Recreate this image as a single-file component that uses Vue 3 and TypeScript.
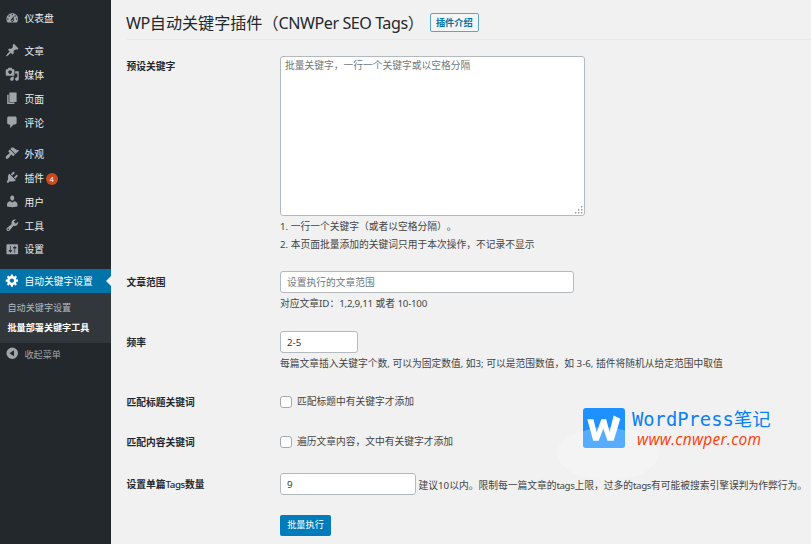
<script setup lang="ts">
import { ref } from 'vue'

interface MenuItem {
  label: string
  icon: string
  badge?: number
}

const groups: MenuItem[][] = [
  [
    {
      label: '仪表盘',
      icon: 'M3.76 16h12.48c1.1-1.37 1.76-3.11 1.76-5 0-4.42-3.58-8-8-8s-8 3.58-8 8c0 1.89.66 3.63 1.76 5zM10 4c.55 0 1 .45 1 1s-.45 1-1 1-1-.45-1-1 .45-1 1-1zM6 6c.55 0 1 .45 1 1s-.45 1-1 1-1-.45-1-1 .45-1 1-1zm8 0c.55 0 1 .45 1 1s-.45 1-1 1-1-.45-1-1 .45-1 1-1zm-5.37 5.55L12 7v6c0 1.1-.9 2-2 2s-2-.9-2-2c0-.57.24-1.08.63-1.45zM4 10c.55 0 1 .45 1 1s-.45 1-1 1-1-.45-1-1 .45-1 1-1zm12 0c.55 0 1 .45 1 1s-.45 1-1 1-1-.45-1-1 .45-1 1-1zm-5 3c0-.55-.45-1-1-1s-1 .45-1 1 .45 1 1 1 1-.45 1-1z',
    },
  ],
  [
    {
      label: '文章',
      icon: 'M10.44 3.02l1.82-1.82 6.36 6.35-1.83 1.82c-1.05-.68-2.48-.57-3.41.36l-.75.75c-.92.93-1.04 2.35-.35 3.41l-1.83 1.82-2.41-2.41-2.8 2.79c-.42.42-3.38 2.71-3.8 2.29s1.86-3.39 2.28-3.81l2.79-2.79L4.1 9.36l1.83-1.82c1.05.69 2.48.57 3.4-.36l.75-.75c.93-.92 1.05-2.35.36-3.41z',
    },
    {
      label: '媒体',
      icon: 'M13 11V4c0-.55-.45-1-1-1h-1.67L9 1H5L3.67 3H2c-.55 0-1 .45-1 1v7c0 .55.45 1 1 1h10c.55 0 1-.45 1-1zM7 4.5c1.38 0 2.5 1.12 2.5 2.5S8.38 9.5 7 9.5 4.5 8.38 4.5 7 5.62 4.5 7 4.5zM14 6h5v10.5c0 1.38-1.12 2.5-2.5 2.5S14 17.88 14 16.5s1.12-2.5 2.5-2.5c.17 0 .34.02.5.05V9h-3V6zm-4 8.05V13h2v3.5c0 1.38-1.12 2.5-2.5 2.5S7 17.88 7 16.5 8.12 14 9.5 14c.17 0 .34.02.5.05z',
    },
    { label: '页面', icon: 'M6 15V2h10v13H6zm-1 1h8v2H3V5h2v11z' },
    {
      label: '评论',
      icon: 'M5 2h9c1.1 0 2 .9 2 2v7c0 1.1-.9 2-2 2h-2l-5 5v-5H5c-1.1 0-2-.9-2-2V4c0-1.1.9-2 2-2z',
    },
  ],
  [
    {
      label: '外观',
      icon: 'M14.48 11.06L7.41 3.99l1.5-1.5c.5-.56 2.3-.47 3.51.32 1.21.8 1.43 1.28 2.91 2.1 1.18.64 2.45 1.26 4.45.85zm-.71.71L6.7 4.7 4.93 6.47c-.39.39-.39 1.02 0 1.41l1.06 1.06c.39.39.39 1.03 0 1.42-.6.6-1.43 1.11-2.21 1.69-.35.26-.7.53-1.01.84C1.43 14.23.4 16.08 1.4 17.07c.99 1 2.84-.03 4.18-1.36.31-.31.58-.66.85-1.02.57-.78 1.08-1.61 1.69-2.21.39-.39 1.02-.39 1.41 0l1.06 1.06c.39.39 1.02.39 1.41 0z',
    },
    {
      label: '插件',
      badge: 4,
      icon: 'M13.11 4.36L9.87 7.6 8 5.73l3.24-3.24c.35-.34 1.05-.2 1.56.32.52.51.66 1.21.31 1.55zm-8 1.77l.91-1.12 9.01 9.01-1.19.84c-.71.71-2.63 1.16-3.82 1.16H6.14L4.9 17.26c-.59.59-1.54.59-2.12 0-.59-.58-.59-1.53 0-2.12l1.24-1.24v-3.88c0-1.13.4-3.19 1.09-3.89zm7.26 3.97l3.24-3.24c.34-.35 1.04-.21 1.55.31.52.51.66 1.21.31 1.55l-3.24 3.25z',
    },
    {
      label: '用户',
      icon: 'M10 9.25c-2.27 0-2.73-3.44-2.73-3.44C7 4.02 7.82 2 9.97 2c2.16 0 2.98 2.02 2.71 3.81 0 0-.41 3.44-2.68 3.44zm0 2.57L12.72 10c2.39 0 4.52 2.33 4.52 4.53v2.49s-3.65 1.13-7.24 1.13c-3.65 0-7.24-1.13-7.24-1.13v-2.49c0-2.25 1.94-4.48 4.47-4.48z',
    },
    {
      label: '工具',
      icon: 'M16.68 9.77c-1.34 1.34-3.3 1.67-4.95.99l-5.41 6.52c-.99.99-2.59.99-3.58 0s-.99-2.59 0-3.57l6.52-5.42c-.68-1.65-.35-3.61.99-4.95 1.28-1.28 3.12-1.62 4.72-1.06l-2.89 2.89 2.82 2.82 2.86-2.87c.53 1.58.18 3.39-1.08 4.65zM3.81 16.21c.4.39 1.04.39 1.43 0 .4-.4.4-1.04 0-1.43-.39-.4-1.03-.4-1.43 0-.39.39-.39 1.03 0 1.43z',
    },
    {
      label: '设置',
      icon: 'M18 16V4c0-.55-.45-1-1-1H3c-.55 0-1 .45-1 1v12c0 .55.45 1 1 1h14c.55 0 1-.45 1-1zM8 11h1c.55 0 1 .45 1 1s-.45 1-1 1H8v1.5c0 .28-.22.5-.5.5s-.5-.22-.5-.5V13H6c-.55 0-1-.45-1-1s.45-1 1-1h1V5.5c0-.28.22-.5.5-.5s.5.22.5.5V11zm5-2h-1c-.55 0-1-.45-1-1s.45-1 1-1h1V5.5c0-.28.22-.5.5-.5s.5.22.5.5V7h1c.55 0 1 .45 1 1s-.45 1-1 1h-1v5.5c0 .28-.22.5-.5.5s-.5-.22-.5-.5V9z',
    },
  ],
]

const gear =
  'M18 12h-2.18c-.17.7-.44 1.35-.81 1.93l1.54 1.54-2.1 2.1-1.54-1.54c-.58.36-1.23.63-1.91.79V19H8v-2.18c-.68-.16-1.33-.43-1.91-.79l-1.54 1.54-2.12-2.12 1.54-1.54c-.36-.58-.63-1.23-.79-1.91H1V9.03h2.17c.16-.7.44-1.35.8-1.94L2.43 5.55l2.1-2.1 1.54 1.54c.58-.37 1.24-.64 1.93-.81V2h3v2.18c.68.16 1.33.43 1.91.79l1.54-1.54 2.12 2.12-1.54 1.54c.36.59.64 1.24.8 1.94H18V12zm-8.5 1.5c1.66 0 3-1.34 3-3s-1.34-3-3-3-3 1.34-3 3 1.34 3 3 3z'

const keywords = ref('')
const range = ref('')
const frequency = ref('2-5')
const matchTitle = ref(false)
const matchContent = ref(false)
const maxTags = ref('9')
</script>

<template>
  <div class="page">
    <nav class="sidebar">
      <ul v-for="(group, i) in groups" :key="i" class="group">
        <li v-for="item in group" :key="item.label" class="item">
          <svg class="icon" viewBox="0 0 20 20"><path :d="item.icon" /></svg>
          <span>{{ item.label }}</span>
          <span v-if="item.badge" class="badge">{{ item.badge }}</span>
        </li>
      </ul>
      <div class="item current">
        <svg class="icon" viewBox="0 0 20 20"><path :d="gear" /></svg>
        <span>自动关键字设置</span>
        <i class="arrow"></i>
      </div>
      <ul class="submenu">
        <li>自动关键字设置</li>
        <li class="on">批量部署关键字工具</li>
      </ul>
      <div class="item collapse">
        <svg class="icon" viewBox="0 0 20 20">
          <path fill-rule="evenodd" d="M10 2a8 8 0 1 0 0 16a8 8 0 0 0 0-16zM12.4 5.8v8.4L6.2 10z" />
        </svg>
        <span>收起菜单</span>
      </div>
    </nav>

    <main class="content">
      <header class="head">
        <h1><span class="lat">WP</span>自动关键字插件（<span class="lat">CNWPer SEO Tags</span>）</h1>
        <a class="intro">插件介绍</a>
      </header>

      <form class="form" @submit.prevent>
        <div class="row r-words">
          <label class="name">预设关键字</label>
          <div class="field">
            <div class="area">
              <textarea v-model="keywords" placeholder="批量关键字，一行一个关键字或以空格分隔"></textarea>
              <svg class="grip" viewBox="0 0 8 8">
                <path d="M6 0h1.4v1.4H6zM3 3h1.4v1.4H3zM6 3h1.4v1.4H6zM0 6h1.4v1.4H0zM3 6h1.4v1.4H3zM6 6h1.4v1.4H6z" />
              </svg>
            </div>
            <p class="note first">1. 一行一个关键字（或者以空格分隔）。</p>
            <p class="note">2. 本页面批量添加的关键词只用于本次操作，不记录不显示</p>
          </div>
        </div>

        <div class="row r-range">
          <label class="name mid">文章范围</label>
          <div class="field">
            <input v-model="range" class="text wide" type="text" placeholder="设置执行的文章范围" />
            <p class="hint">对应文章ID：<span class="tight">1,2,9,11</span> 或者 <span class="tight">10-100</span></p>
          </div>
        </div>

        <div class="row r-freq">
          <label class="name mid">频率</label>
          <div class="field">
            <input v-model="frequency" class="text short" type="text" />
            <p class="hint">每篇文章插入关键字个数, 可以为固定数值, 如3; 可以是范围数值，如 3-6, 插件将随机从给定范围中取值</p>
          </div>
        </div>

        <div class="row r-check">
          <label class="name">匹配标题关键词</label>
          <label class="check"><input v-model="matchTitle" type="checkbox" />匹配标题中有关键字才添加</label>
        </div>

        <div class="row r-check">
          <label class="name">匹配内容关键词</label>
          <label class="check"><input v-model="matchContent" type="checkbox" />遍历文章内容，文中有关键字才添加</label>
        </div>

        <div class="row r-max">
          <label class="name mid">设置单篇<span class="tags">Tags</span>数量</label>
          <div class="field inline">
            <input v-model="maxTags" class="text medium" type="text" />
            <span class="limit">建议10以内。限制每一篇文章的<span class="word">tags</span>上限，过多的<span class="word">tags</span>有可能被搜索引擎误判为作弊行为。</span>
          </div>
        </div>

        <button class="submit" type="submit">批量执行</button>
      </form>
    </main>

    <aside class="mark">
      <i class="glow"></i>
      <svg class="logo" viewBox="0 0 42 40">
        <rect width="42" height="40" rx="3" fill="#1e90ff" />
        <path d="M0 23.6C7 20 17 18.6 26 19.2c6 .4 11.500 1.600 16 3.400V37a3 3 0 0 1-3 3H3a3 3 0 0 1-3-3z" fill="#fff" fill-opacity=".25" />
        <path d="M4.300 11.300h6.200l3.200 13.200 4.600-13.200h4.900l3.300 12.600 4.200-16.400 6.600 3.300-6.600 21.900h-6.200l-4.200-12-4.600 12h-5.500z" fill="#fff" />
      </svg>
      <div class="brand">
        <div class="title"><span>WordPress</span><b>笔记</b></div>
        <div class="url">www.cnwper.com</div>
      </div>
    </aside>
  </div>
</template>

<style>
body {
  margin: 0;
  background: #f1f1f1;
}
</style>

<style scoped>
* {
  box-sizing: border-box;
}
.page {
  position: relative;
  display: flex;
  width: 811px;
  height: 544px;
  overflow: hidden;
  background: #f1f1f1;
  color: #444;
  font: 9.75px/14px 'Noto Sans', 'Noto Sans CJK SC', sans-serif;
  text-spacing-trim: space-all;
}
ul,
p,
h1 {
  margin: 0;
  padding: 0;
  list-style: none;
}
.sidebar {
  flex: none;
  width: 111px;
  padding-top: 7px;
  background: #23282d;
  color: #eee;
}
.group {
  margin-bottom: 7.500px;
}
.group:first-child {
  margin-bottom: 8.500px;
}
.item {
  position: relative;
  display: flex;
  align-items: center;
  height: 23.9px;
  padding: 1px 0 0 5px;
}
.icon {
  width: 14.5px;
  height: 14.5px;
  margin: -3px 5px 0 0;
  fill: #a0a5aa;
}
.badge {
  width: 12.5px;
  height: 12.5px;
  margin-left: 1.500px;
  border-radius: 50%;
  background: #ca4a1f;
  color: #fff;
  font-size: 7.5px;
  line-height: 12.5px;
  text-align: center;
}
.current {
  background: #0073aa;
  color: #fff;
}
.current .icon {
  fill: #fff;
}
.arrow {
  position: absolute;
  right: 0;
  top: 6.5px;
  border: 5.5px solid transparent;
  border-left: 0;
  border-right-color: #f1f1f1;
}
.submenu {
  height: 49.500px;
  padding: 5px 0 0 7.500px;
  background: #32373c;
  color: #b4b9be;
  font-size: 9.1px;
}
.submenu li {
  height: 20px;
  line-height: 20px;
}
.submenu .on {
  color: #fff;
  font-weight: 700;
}
.collapse {
  color: #a0a5aa;
  font-size: 9.100px;
}
.content {
  flex: 1;
  min-width: 0;
  padding-left: 16px;
}
.head {
  display: flex;
  align-items: center;
  height: 40px;
  padding-top: 6px;
  border-bottom: 1px solid #e8e8e8;
}
h1 {
  margin-left: -1px;
  color: #23282d;
  font-size: 16.100px;
  font-weight: 400;
  line-height: 24px;
  white-space: nowrap;
}
.lat {
  letter-spacing: -0.45px;
}
.intro {
  width: 49px;
  height: 19.5px;
  margin-left: 6px;
  border: 1px solid #5ba6c8;
  border-radius: 2px;
  background: #f3f5f6;
  color: #0071a1;
  font-size: 9.2px;
  font-weight: 700;
  line-height: 18px;
  text-align: center;
}
.form {
  padding-top: 16px;
}
.row {
  display: grid;
  grid-template-columns: 153px 1fr;
}
.name {
  margin-left: -0.500px;
  padding-top: 4px;
  color: #23282d;
  font-weight: 700;
}
.name.mid {
  padding-top: 5px;
}
.tags {
  font-weight: 500;
  letter-spacing: -0.400px;
}
.area {
  position: relative;
  width: 305px;
  height: 160px;
}
textarea,
.text {
  display: block;
  border: 1px solid #b4b9be;
  border-radius: 3px;
  outline: none;
  background: #fff;
  color: #32373c;
  font: inherit;
}
textarea {
  width: 305px;
  height: 160px;
  padding: 2px 4px;
  resize: none;
}
::placeholder {
  color: #72777c;
  opacity: 1;
}
.grip {
  position: absolute;
  right: 2px;
  bottom: 2px;
  width: 8px;
  height: 8px;
  fill: #999;
}
.text {
  height: 22px;
  padding: 1px 6px 0;
}
.wide {
  width: 294px;
}
.short {
  width: 77.500px;
}
.medium {
  width: 135.500px;
}
.note {
  height: 18px;
  line-height: 18px;
}
.note.first {
  margin-top: 2px;
}
.hint {
  margin-top: 3px;
  line-height: 16px;
  white-space: nowrap;
}
.tight {
  letter-spacing: -0.250px;
}
.r-words {
  height: 215px;
}
.r-range {
  height: 60px;
}
.r-freq {
  height: 60.500px;
}
.r-check {
  height: 40.5px;
}
.check {
  display: flex;
  align-items: center;
  height: 20px;
  white-space: nowrap;
}
.check input {
  appearance: none;
  width: 12px;
  height: 12px;
  margin: 0 5px 0 0;
  border: 1px solid #a3a9ae;
  border-radius: 3px;
  background: #fff;
}
.r-max {
  height: 42px;
}
.inline {
  display: flex;
}
.limit {
  margin: 6px 0 0 3px;
  white-space: nowrap;
}
.word {
  letter-spacing: -0.400px;
}
.submit {
  display: block;
  width: 51px;
  height: 21.5px;
  margin-left: 153px;
  padding: 0;
  border: 0;
  border-radius: 2px;
  background: #007cba;
  color: #fff;
  font: inherit;
  font-size: 9.2px;
}
/* Watermark floating over the form */
.mark {
  position: absolute;
  left: 583px;
  top: 408px;
  display: flex;
}
.glow {
  position: absolute;
  left: -26px;
  top: 19px;
  width: 102px;
  height: 53px;
  border-radius: 50%;
  background: #f4f4f4;
}
.logo {
  position: relative;
  width: 42px;
  height: 40px;
}
.brand {
  position: relative;
  padding-left: 7px;
}
.title {
  display: flex;
  height: 22px;
  color: #0a80f5;
  font: 18.8px/23px 'DejaVu Sans Mono', monospace;
}
.title b {
  font: 400 18.500px/21px 'Noto Sans CJK SC', sans-serif;
}
.url {
  padding-left: 5px;
  color: #ff3a05;
  font: italic 500 15.500px/18px 'Open Sans', sans-serif;
  letter-spacing: 0.300px;
}
</style>
